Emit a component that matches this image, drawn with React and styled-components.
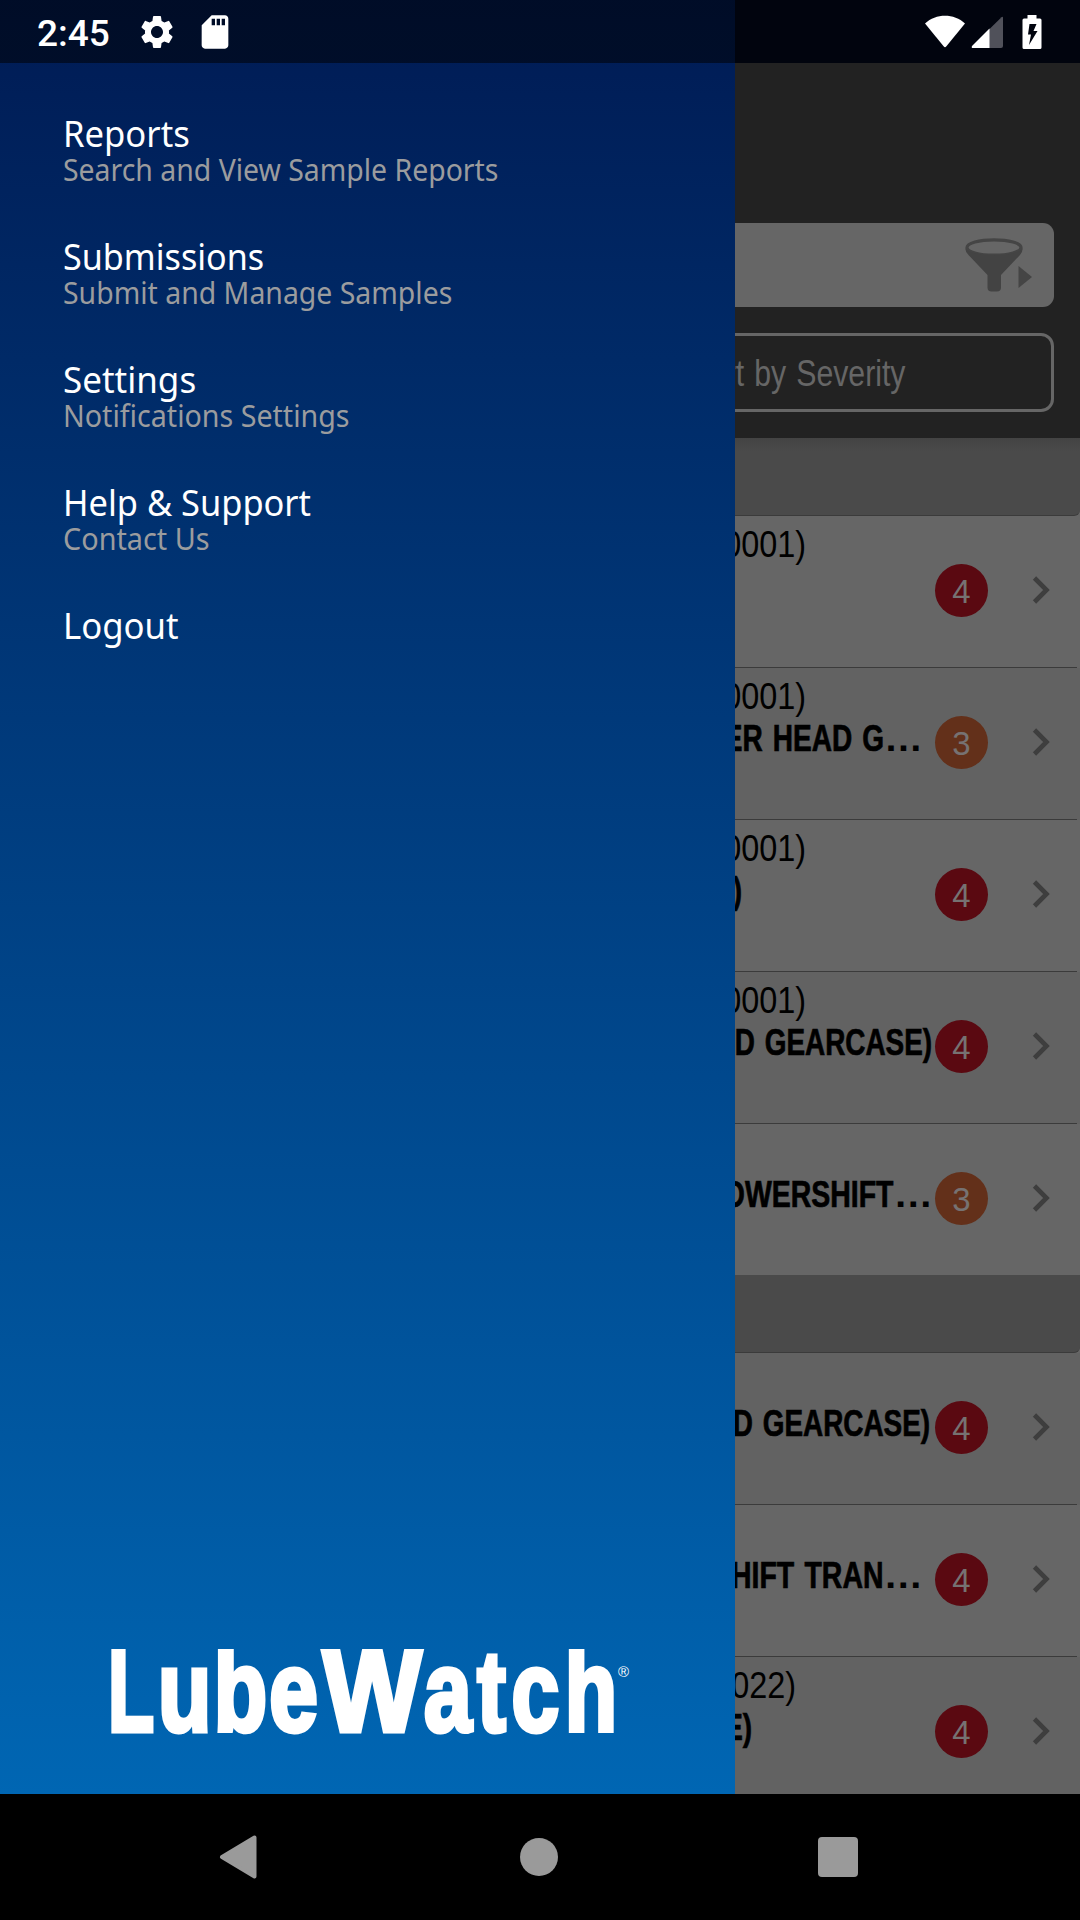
import React from "react";
import styled, { createGlobalStyle } from "styled-components";
import { MdSettings, MdSdCard } from "react-icons/md";

const palette = {
  white: "#ffffff",
  header: "#222222",
  field: "#666666",
  row: "#666666",
  rowAlt: "#626262",
  section: "#4a4a4a",
  divider: "#3b3b3b",
  chevron: "#3e3e3e",
  red: "#5a0911",
  orange: "#63301a",
  nav: "#9a9a9a",
  subtitle: "#9b9c9e",
};

const MENU = [
  { title: "Reports", scale: 0.962, sub: "Search and View Sample Reports", subScale: 0.947 },
  { title: "Submissions", scale: 0.948, sub: "Submit and Manage Samples", subScale: 0.9475 },
  { title: "Settings", scale: 0.972, sub: "Notifications Settings", subScale: 0.954 },
  { title: "Help & Support", scale: 0.956, sub: "Contact Us", subScale: 0.96 },
  { title: "Logout", scale: 0.965 },
];

const SECTIONS = [
  [
    { unit: "0001)", severity: 4 },
    { unit: "0001)", name: "ER HEAD G", cut: true, scale: 0.778, gap: 12, severity: 3 },
    { unit: "0001)", name: ")", scale: 0.774, gap: 193, severity: 4 },
    { unit: "0001)", name: "D GEARCASE)", scale: 0.774, gap: 3, severity: 4 },
    { name: "OWERSHIFT", cut: true, scale: 0.79, gap: 2, severity: 3 },
  ],
  [
    { name: "D GEARCASE)", scale: 0.774, gap: 5, severity: 4 },
    { name: "HIFT TRAN", cut: true, scale: 0.79, gap: 12, severity: 4 },
    { unit: "022)", unitGap: 139, name: "E)", scale: 0.774, gap: 183, severity: 4 },
  ],
];

function StatusIcons() {
  return (
    <StatusRight>
      <svg width="42" height="34" viewBox="0 0 42 34">
        <path d="M1 8.5C12 -1.8 30 -1.8 41 8.5L22.4 31.3Q21 33 19.6 31.3Z" fill="#fff" />
      </svg>
      <svg width="32" height="34" viewBox="0 0 32 34">
        <path d="M18 14.5L30.5 2.2Q32 1 32 3V31Q32 33 30 33H18Z" fill="#50515a" />
        <path d="M18.500 13.500V33H2Q0 33 1 31Z" fill="#fff" />
      </svg>
      <svg width="20" height="34" viewBox="0 0 20 34">
        <path
          d="M5.500 0H14.500V3.500H18Q19.500 3.500 19.500 5V32.500Q19.500 34 18 34H2Q0.500 34 0.500 32.500V5Q0.500 3.500 2 3.500H5.500ZM7.500 9L6 19.500H9L7 30L15.500 16H11.500L14.500 9Z"
          fill="#fff"
          fillRule="evenodd"
        />
      </svg>
    </StatusRight>
  );
}

function FunnelIcon() {
  return (
    <svg width="68" height="56" viewBox="0 0 68 56">
      <ellipse cx="29" cy="9.500" rx="27" ry="7.700" fill="none" stroke="#454545" strokeWidth="3.200" />
      <path d="M0.500 10C4 19.500 54 19.500 57.500 10Q58 13.500 55 17L36 37V49.500Q36 53.500 32 53.500H26.500Q22.500 53.500 22.500 49.500V37L3.500 17Q0 13.500 0.500 10Z" fill="#434343" />
      <path d="M53.500 28L67 39L53.500 50Z" fill="#454545" />
    </svg>
  );
}

function ReportRow({ report, alt, last }) {
  const { unit, unitGap = 129, name, cut, scale, gap, severity } = report;

  return (
    <ReportRowBlock $alt={alt} $last={last}>
      <ReportText>
        <UnitLine $gap={unitGap}>{unit}</UnitLine>
        {name && (
          <NameLine $gap={gap} $scale={scale}>
            {name}
            {cut && <Dots>…</Dots>}
          </NameLine>
        )}
      </ReportText>
      <Badge $severity={severity}>{severity}</Badge>
      <svg width="18" height="28" viewBox="0 0 18 28">
        <path d="M2.500 2L14.500 14L2.500 26" fill="none" stroke={palette.chevron} strokeWidth="4.600" />
      </svg>
    </ReportRowBlock>
  );
}

export default function App() {
  return (
    <Screen>
      <GlobalStyle />
      <Content>
        <Header>
          <SearchField>
            <FunnelIcon />
          </SearchField>
          <SortButton>
            <span>Sort by Severity</span>
          </SortButton>
        </Header>
        {SECTIONS.map((reports, i) => (
          <React.Fragment key={i}>
            <SectionBar $shaded={i === 0} />
            {reports.map((report, j) => (
              <ReportRow key={j} report={report} alt={(i + j) % 2 === 1} last={j === reports.length - 1} />
            ))}
          </React.Fragment>
        ))}
      </Content>

      <Drawer>
        <Menu>
          {MENU.map(({ title, scale, sub, subScale }) => (
            <li key={title}>
              <MenuTitle $scale={scale}>{title}</MenuTitle>
              {sub && <MenuSubtitle $scale={subScale}>{sub}</MenuSubtitle>}
            </li>
          ))}
        </Menu>
        <Logo>
          <LogoPart $width={49.8} $scale={0.656}>L</LogoPart>
          <LogoPart $width={165.7} $scale={0.76} $spacing={3}>ube</LogoPart>
          <LogoPart $width={100.8} $scale={0.906}>W</LogoPart>
          <LogoPart $width={193.7} $scale={0.745} $spacing={7.6}>atch</LogoPart>
          <Registered>®</Registered>
        </Logo>
      </Drawer>

      <StatusBar>
        <Clock>2:45</Clock>
        <MdSettings size={40} />
        <MdSdCard size={40} />
        <StatusIcons />
      </StatusBar>

      <NavBar>
        <svg width="38" height="44" viewBox="0 0 38 44">
          <path d="M35.500 2.500V41.500L3 22Z" fill={palette.nav} stroke={palette.nav} strokeWidth="4" strokeLinejoin="round" />
        </svg>
        <HomeDot />
        <RecentSquare />
      </NavBar>
    </Screen>
  );
}

const GlobalStyle = createGlobalStyle`
  * {
    box-sizing: border-box;
  }

  body, p, ul {
    margin: 0;
    padding: 0;
  }

  body {
    background: #000;
  }
`;

const Screen = styled.div`
  position: relative;
  width: 1080px;
  height: 1920px;
  overflow: hidden;
  display: flex;
  flex-direction: column;
  font-family: "Liberation Sans", Arial, sans-serif;
`;

const Content = styled.main`
  height: 1794px;
  flex: none;
  overflow: hidden;
  background: ${palette.row};
`;

const Header = styled.header`
  height: 438px;
  padding: 223px 26px 0;
  background: ${palette.header};
  display: flex;
  flex-direction: column;
  align-items: flex-end;
  gap: 26px;
`;

const SearchField = styled.div`
  width: 100%;
  height: 84px;
  border-radius: 11px;
  background: ${palette.field};
  display: flex;
  justify-content: flex-end;
  padding: 15px 21px 0 0;
`;

const SortButton = styled.div`
  width: 512px;
  height: 79px;
  padding-right: 2px;
  border: 3px solid ${palette.field};
  border-radius: 13px;
  color: ${palette.field};
  font-size: 36px;
  line-height: 76px;
  text-align: center;
  white-space: nowrap;

  span {
    display: inline-block;
    word-spacing: 2px;
    transform: scaleX(0.84);
  }
`;

const SectionBar = styled.div`
  height: 78px;
  background: ${(p) => (p.$shaded ? `linear-gradient(#434343, ${palette.section} 14px)` : palette.section)};
  border-bottom: 1px solid ${palette.divider};
  border-bottom-right-radius: 6px;
`;

const ReportRowBlock = styled.div`
  height: ${(p) => (p.$last ? 151 : 152)}px;
  display: flex;
  align-items: flex-start;
  background: ${(p) =>
    p.$last ? "none" : `linear-gradient(${palette.divider}, ${palette.divider}) 0 100% / 1077px 1px no-repeat`};
  background-color: ${(p) => (p.$alt ? palette.rowAlt : palette.row)};

  svg {
    margin: 60px 0 0 44px;
  }
`;

const ReportText = styled.div`
  width: 935px;
  padding-top: 8px;
  display: flex;
  flex-direction: column;
  align-items: flex-end;
  font-size: 36px;
  line-height: 42px;
  color: #000;
  white-space: nowrap;
`;

const UnitLine = styled.p`
  height: 42px;
  margin-right: ${(p) => p.$gap}px;
  transform: scaleX(0.9);
  transform-origin: right;
`;

const NameLine = styled.p`
  margin-right: ${(p) => p.$gap}px;
  font-weight: bold;
  word-spacing: 3px;
  -webkit-text-stroke: 0.7px #000;
  transform: scaleX(${(p) => p.$scale});
  transform-origin: right;
`;

const Dots = styled.span`
  display: inline-block;
  margin-right: 14px;
  -webkit-text-stroke: 0;
  transform: scaleX(1.39);
  transform-origin: left;
`;

const Badge = styled.div`
  width: 53px;
  height: 53px;
  margin-top: 48px;
  border-radius: 50%;
  background: ${(p) => (p.$severity === 4 ? palette.red : palette.orange)};
  color: #767272;
  font-size: 33px;
  line-height: 56px;
  text-align: center;
`;

const Drawer = styled.aside`
  position: absolute;
  top: 0;
  left: 0;
  width: 735px;
  height: 1794px;
  background: linear-gradient(#001b54, #0066b3);
  display: flex;
  flex-direction: column;
  justify-content: space-between;
`;

const Menu = styled.ul`
  padding: 113px 0 0 63px;
  list-style: none;
  font-family: "Noto Sans", sans-serif;
  white-space: nowrap;

  li {
    height: 123px;
  }
`;

const MenuTitle = styled.p`
  width: max-content;
  font-size: 36px;
  line-height: 42px;
  color: ${palette.white};
  transform: scaleX(${(p) => p.$scale});
  transform-origin: left;
`;

const MenuSubtitle = styled.p`
  width: max-content;
  font-size: 30px;
  line-height: 30px;
  color: ${palette.subtitle};
  transform: scaleX(${(p) => p.$scale});
  transform-origin: left;
`;

/* the clip levels the b and h ascenders with the capitals */
const Logo = styled.div`
  height: 160px;
  padding-left: 108px;
  display: flex;
  color: ${palette.white};
  font-size: 115px;
  font-weight: bold;
  line-height: 115px;
  clip-path: inset(15px 0 0);
`;

const LogoPart = styled.span`
  flex: none;
  width: ${(p) => p.$width}px;
  letter-spacing: ${(p) => p.$spacing || 0}px;
  white-space: nowrap;
  -webkit-text-stroke: 5px ${palette.white};
  transform: scaleX(${(p) => p.$scale});
  transform-origin: left;
`;

const Registered = styled.span`
  font-size: 15px;
  line-height: 18px;
  font-weight: normal;
  padding-top: 29px;
`;

const StatusBar = styled.div`
  position: absolute;
  top: 0;
  left: 0;
  width: 100%;
  height: 63px;
  padding: 0 38px 0 37px;
  display: flex;
  align-items: center;
  color: ${palette.white};
  background: linear-gradient(to right, rgba(0, 3, 10, 0.6) 735px, #01040e 735px);

  svg:nth-of-type(1) {
    margin-left: 27px;
  }

  svg:nth-of-type(2) {
    margin-left: 18px;
  }
`;

const Clock = styled.span`
  font: 500 37px/63px Roboto, sans-serif;
  padding-top: 3px;
`;

const StatusRight = styled.div`
  margin-left: auto;
  display: flex;

  && svg:nth-of-type(1) {
    margin-left: 0;
  }

  && svg:nth-of-type(2) {
    margin-left: 5px;
  }

  svg:nth-of-type(3) {
    margin-left: 19px;
  }
`;

const NavBar = styled.nav`
  height: 126px;
  padding: 0 222px 0 219px;
  background: #000;
  display: flex;
  align-items: center;
  justify-content: space-between;
`;

const HomeDot = styled.span`
  width: 38px;
  height: 38px;
  margin-left: 3px;
  border-radius: 50%;
  background: ${palette.nav};
`;

const RecentSquare = styled.span`
  width: 40px;
  height: 40px;
  border-radius: 4px;
  background: ${palette.nav};
`;
